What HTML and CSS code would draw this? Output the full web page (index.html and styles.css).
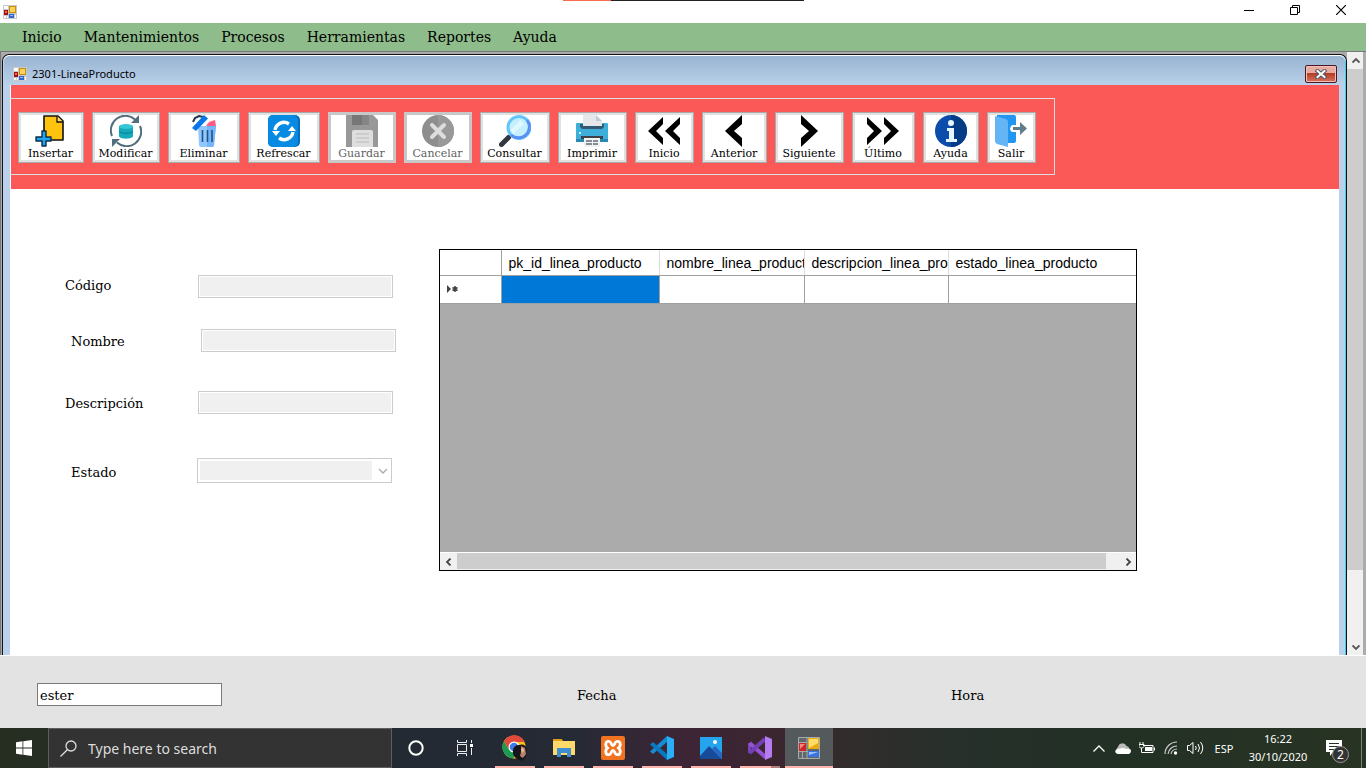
FILE: index.html
```html
<!DOCTYPE html>
<html lang="es">
<head>
<meta charset="utf-8">
<title>2301-LineaProducto</title>
<link rel="stylesheet" href="styles.css">
</head>
<body>
<svg class="defs" aria-hidden="true">
  <symbol id="form-icon" viewBox="0 0 14 14">
    <rect width="14" height="14" fill="#c9c9c9"/>
    <path d="M1 1h4v3H1zM1 11h2v2H1zM4 11h1v2H4zM12 10h1v3h-1z" fill="#fff"/>
    <rect x="6" y="1" width="7" height="7" fill="#c98d10"/>
    <rect x="7" y="2" width="5" height="5" fill="#fcd25a"/>
    <rect x="1" y="5" width="4" height="5" fill="#a01010"/>
    <rect x="2" y="6" width="2" height="2" fill="#ee6a55"/>
    <rect x="6" y="9" width="5" height="4" fill="#3464cf"/>
    <rect x="7" y="10" width="3" height="1" fill="#8db4ff"/>
  </symbol>
</svg>

<header class="titlebar">
  <svg class="app-icon"><use href="#form-icon"/></svg>
  <div class="window-buttons">
    <button aria-label="Minimizar"><svg width="10" height="10" viewBox="0 0 10 10"><path d="M0 5.500h10" stroke="#000"/></svg></button>
    <button aria-label="Restaurar"><svg width="10" height="10" viewBox="0 0 10 10"><path d="M.5 2.500h7v7h-7zM2.500 2.500v-2h7v7h-2" fill="none" stroke="#000"/></svg></button>
    <button aria-label="Cerrar"><svg width="10" height="10" viewBox="0 0 10 10"><path d="M0 0l10 10M10 0L0 10" stroke="#000" stroke-width="1.200"/></svg></button>
  </div>
</header>

<nav class="menu">
  <button>Inicio</button>
  <button>Mantenimientos</button>
  <button>Procesos</button>
  <button>Herramientas</button>
  <button>Reportes</button>
  <button>Ayuda</button>
</nav>

<main class="workspace">
  <section class="child">
    <div class="child-title">
      <svg class="app-icon"><use href="#form-icon"/></svg>
      <h1>2301-LineaProducto</h1>
      <button class="child-close" aria-label="Cerrar ventana">
        <svg width="12" height="10" viewBox="0 0 12 10"><path d="M2.500 2l7 6M9.500 2l-7 6" stroke="#4d5868" stroke-width="4" stroke-linecap="square"/><path d="M2.500 2l7 6M9.500 2l-7 6" stroke="#fff" stroke-width="2" stroke-linecap="square"/></svg>
      </button>
    </div>
    <div class="child-body">
      <div class="banner">
        <div class="toolbar" role="toolbar" aria-label="Navegador">
          <button class="tool"><svg viewBox="0 0 32 32"><path d="M9 1h14l5 5v19H9z" fill="#ffc20e" stroke="#111" stroke-width="1.600" stroke-linejoin="round"/><path d="M22 1v6h6" fill="#ffe06a" stroke="#111" stroke-width="1.300"/><path d="M7 16h4v6h5v4h-5v5H7v-5H1v-4h6z" fill="#1fa4ef" stroke="#0d2d44" stroke-width="1.400" stroke-linejoin="round"/></svg><span>Insertar</span></button>
          <button class="tool"><svg viewBox="0 0 32 32"><path d="M2 21A14.500 14.500 0 0 1 25 4.500M30 11A14.500 14.500 0 0 1 7 27.500" fill="none" stroke="#526d7b" stroke-width="2"/><path d="M29 0v8h-8zM2 24h8l-8 8z" fill="#526d7b"/><path d="M9 11v10c0 3.500 14 3.500 14 0V11z" fill="#14a9bb"/><ellipse cx="16" cy="11.500" rx="7" ry="2.600" fill="#35c6d6"/><path d="M9 16c1 3 13 3 14 0" fill="none" stroke="#087d90"/></svg><span>Modificar</span></button>
          <button class="tool"><svg viewBox="0 0 32 32"><path d="M5 7l2-4 4-2 4 1" fill="none" stroke="#26394e" stroke-width="2"/><path d="M10 11h18l-2 19q0 2-2 2H13q-2 0-2-2z" fill="#8fc8ff"/><path d="M19 11h9l-2 19q0 2-2 2h-5z" fill="#74b5fb"/><path d="M18 11l3-4 6-2 1 6z" fill="#ff5b87"/><path d="M4 13L16 0l4 3.500L8 16z" fill="#0876e8"/><path d="M14.500 15v12M19.500 15v12M24 15v12" stroke="#22527e" stroke-width="1.600"/></svg><span>Eliminar</span></button>
          <button class="tool"><svg viewBox="0 0 32 32"><rect width="32" height="32" rx="5" fill="#066bb8"/><rect width="30" height="32" rx="5" fill="#078be2"/><path d="M7 15a9 9 0 0 1 14-6M25 17a9 9 0 0 1-14 6" fill="none" stroke="#fff" stroke-width="3.400"/><path d="M4 16h8l-4 5zM20 16h8l-4-5z" fill="#fff"/></svg><span>Refrescar</span></button>
          <button class="tool" disabled><svg viewBox="0 0 32 32"><path d="M0 0h27l5 5v27H0z" fill="#989898"/><path d="M6 0h17v10H6z" fill="#777"/><path d="M16 0h7v10h-7z" fill="#858585"/><path d="M6 17q0-2 2-2h17q2 0 2 2v15H6z" fill="#dedede"/><path d="M10 19h13M10 23h13M10 27h13" stroke="#bbb"/></svg><span>Guardar</span></button>
          <button class="tool" disabled><svg viewBox="0 0 32 32"><circle cx="16" cy="16" r="16" fill="#8e8e8e"/><path d="M16 0a16 16 0 0 1 0 32z" fill="#999"/><path d="M10 10l12 12M22 10L10 22" stroke="#ddd" stroke-width="4" stroke-linecap="round"/></svg><span>Cancelar</span></button>
          <button class="tool"><svg viewBox="0 0 32 32"><path d="M10 22l3-3" stroke="#9aa8b1" stroke-width="3"/><path d="M2.500 29.500l7-7" stroke="#33383f" stroke-width="5" stroke-linecap="round"/><circle cx="20" cy="12.500" r="11" fill="#c4efff" stroke="#63c5fa" stroke-width="3"/><path d="M28 5A11 11 0 0 1 12 20" fill="none" stroke="#5a91f2" stroke-width="3"/><path d="M13 17L23 7" stroke="#dff8ff" stroke-width="5"/></svg><span>Consultar</span></button>
          <button class="tool"><svg viewBox="0 0 32 32"><rect y="8" width="32" height="19" rx="1" fill="#3eaedb"/><path d="M4 9h24v3l-2 2H6l-2-2z" fill="#315a70"/><path d="M7 0h13l6 6v5H7z" fill="#e4e8ea"/><path d="M20 0v6h6z" fill="#c4cbd0"/><path d="M0 24h32v3H0z" fill="#2787b5"/><path d="M5 21h22v3H5z" fill="#3c4248"/><path d="M8 23h16v9H8z" fill="#f0f2f3"/><path d="M10 26h6M17 26h5M10 29h6M17 29h5" stroke="#858e94" stroke-width="2"/><path d="M3 18h2" stroke="#c8efff" stroke-width="2"/></svg><span>Imprimir</span></button>
          <button class="tool"><svg viewBox="0 0 32 32"><path d="M15 2L0 16l15 14v-7l-7-7 7-7zM32 2L17 16l15 14v-7l-7-7 7-7z"/></svg><span>Inicio</span></button>
          <button class="tool"><svg viewBox="0 0 32 32"><path d="M24 0L7 16l17 16v-9l-8-7 8-7z"/></svg><span>Anterior</span></button>
          <button class="tool"><svg viewBox="0 0 32 32"><path d="M8 0l17 16L8 32v-9l8-7-8-7z"/></svg><span>Siguiente</span></button>
          <button class="tool"><svg viewBox="0 0 32 32"><path d="M0 2l15 14L0 30v-7l7-7-7-7zM17 2l15 14-15 14v-7l7-7-7-7z"/></svg><span>Último</span></button>
          <button class="tool"><svg viewBox="0 0 32 32"><circle cx="16" cy="16" r="16" fill="#0c4cac"/><path d="M16 0a16 16 0 0 1 0 32z" fill="#063b86"/><circle cx="16" cy="8" r="3" fill="#e6f7ff"/><path d="M12 13h7v11h3v3H11v-3h3v-8h-2z" fill="#e6f7ff"/></svg><span>Ayuda</span></button>
          <button class="tool"><svg viewBox="0 0 32 32"><path d="M2 0h17q2 0 2 2v24q0 2-2 2H2z" fill="#2196f3"/><path d="M0 1l11 3q2 1 2 3v25L2 29q-2-1-2-3z" fill="#64b5f6"/><path d="M17 10h7V5l8 8.500-8 8.500v-5h-7q-4-3 0-7z" fill="#fff"/><path d="M18 12h7V7l7 6.500-7 6.500v-5h-7z" fill="#607d8b"/></svg><span>Salir</span></button>
        </div>
      </div>
      <div class="content">
        <form class="fields">
          <div class="field"><label for="codigo">Código</label><input id="codigo" type="text" disabled></div>
          <div class="field field-nombre"><label for="nombre">Nombre</label><input id="nombre" type="text" disabled></div>
          <div class="field"><label for="descripcion">Descripción</label><input id="descripcion" type="text" disabled></div>
          <div class="field field-estado"><label for="estado">Estado</label>
            <div class="select-wrap"><select id="estado" disabled><option></option></select><svg width="10" height="6" viewBox="0 0 10 6"><path d="M1 1l4 4 4-4" fill="none" stroke="#aaa" stroke-width="1.300"/></svg></div>
          </div>
        </form>
        <div class="datagrid">
          <table>
            <colgroup><col class="col-mark"><col class="col-id"><col class="col-nombre"><col class="col-descripcion"><col></colgroup>
            <thead><tr><th></th><th>pk_id_linea_producto</th><th>nombre_linea_producto</th><th>descripcion_linea_producto</th><th>estado_linea_producto</th></tr></thead>
            <tbody><tr><td class="mark"><svg width="12" height="8" viewBox="0 0 12 8"><path d="M0 0l4 4-4 4z" fill="#444"/><path d="M8 1v6M5.500 2.500l5 3M10.500 2.500l-5 3" stroke="#444" stroke-width="1.500"/></svg></td><td class="selected"></td><td></td><td></td><td></td></tr></tbody>
          </table>
          <div class="hscroll">
            <button aria-label="Desplazar a la izquierda"><svg width="8" height="8" viewBox="0 0 8 8"><path d="M5.500 .500L2 4l3.500 3.500" fill="none" stroke="#444" stroke-width="1.800"/></svg></button>
            <div class="htrack"><div class="hthumb"></div></div>
            <button aria-label="Desplazar a la derecha"><svg width="8" height="8" viewBox="0 0 8 8"><path d="M2.500 .500L6 4 2.500 7.500" fill="none" stroke="#444" stroke-width="1.800"/></svg></button>
          </div>
        </div>
      </div>
    </div>
  </section>
  <div class="vscroll">
    <button aria-label="Desplazar hacia arriba"><svg width="8" height="8" viewBox="0 0 8 8"><path d="M.500 5.500L4 2l3.500 3.500" fill="none" stroke="#555" stroke-width="1.800"/></svg></button>
    <div class="vtrack"><div class="vthumb"></div></div>
    <button aria-label="Desplazar hacia abajo"><svg width="8" height="8" viewBox="0 0 8 8"><path d="M.500 2.500L4 6l3.500-3.500" fill="none" stroke="#555" stroke-width="1.800"/></svg></button>
  </div>
</main>

<section class="status">
  <input class="user" type="text" value="ester" aria-label="Usuario">
  <span>Fecha</span>
  <span>Hora</span>
</section>

<footer class="taskbar">
  <button class="start" aria-label="Inicio de Windows"><svg width="16" height="16" viewBox="0 0 16 16"><path d="M0 2.200l6.500-.9v6.200H0zM7.300 1.200L16 0v7.500H7.300zM0 8.400h6.500v6.300L0 13.800zM7.300 8.400H16V16l-8.700-1.200z" fill="#fff"/></svg></button>
  <label class="search"><svg width="17" height="17" viewBox="0 0 17 17"><circle cx="11" cy="6" r="5" fill="none" stroke="#ddd" stroke-width="1.300"/><path d="M7.300 9.700L.500 16.500" stroke="#ddd" stroke-width="1.300"/></svg><input type="text" placeholder="Type here to search" aria-label="Type here to search"></label>
  <button class="sys" aria-label="Cortana"><svg width="16" height="16" viewBox="0 0 16 16"><circle cx="8" cy="8" r="6.700" fill="none" stroke="#fff" stroke-width="2"/></svg></button>
  <button class="sys" aria-label="Task view"><svg width="17" height="16" viewBox="0 0 17 16"><path d="M1.500 0v2.500h9V0M1.500 16v-2.500h9V16M1.500 4.500h9v7h-9zM15.500 0v3M15.500 8v7" fill="none" stroke="#eee"/><path d="M14 4h3v3h-3z" fill="#fff"/></svg></button>
  <div class="apps">
    <button aria-label="Chrome"><svg width="26" height="26" viewBox="0 0 26 26"><circle cx="12" cy="12" r="11.500" fill="#fbc116"/><path d="M2 6.300A11.500 11.500 0 0 1 22.500 7H12l-5 8z" fill="#e2483d"/><path d="M2 6.300a11.500 11.500 0 0 0 9 17.200l5-8.500-9 0z" fill="#199b55"/><circle cx="12" cy="12" r="5.500" fill="#fff"/><circle cx="12" cy="12" r="4.300" fill="#3a7de8"/><path d="M11 15q1-5 6-5 6-2 8 4l-1 8-4 4-5-2q-5-3-4-9z" fill="#17151b"/><path d="M19 11l4 2 1 6-3 4-3-2 1-4z" fill="#b88368"/><path d="M19 14l2-1 1 3-2 2z" fill="#e8bca2"/></svg></button>
    <button aria-label="Explorador"><svg width="22" height="20" viewBox="0 0 22 20"><path d="M0 1h8l2 2h12v14H0z" fill="#ffd96a"/><path d="M0 1h9v2H0z" fill="#dda017"/><path d="M4 19v-9h14v9h-4v-4H8v4z" fill="#3d8fd1"/></svg></button>
    <button aria-label="XAMPP"><svg width="24" height="24" viewBox="0 0 24 24"><rect width="24" height="24" rx="2" fill="#ef7320"/><path d="M8.500 5.500c-4-1-5 4-2 6.500-3 2.500-2 7.500 2 6.500 2-.5 1.500-4 3.500-4s1.500 3.500 3.500 4c4 1 5-4 2-6.500 3-2.500 2-7.500-2-6.500-2 .5-1.500 4-3.500 4s-1.500-3.500-3.500-4z" fill="none" stroke="#fff" stroke-width="2.800"/></svg></button>
    <button aria-label="VS Code"><svg width="24" height="24" viewBox="0 0 24 24"><path d="M17 0v6L3 18l-3-2.500z" fill="#168bd2"/><path d="M0 8.500L3 6l14 12v6z" fill="#0879bf"/><path d="M17 0l7 3v18l-7 3z" fill="#2aaef5"/></svg></button>
    <button aria-label="Fotos"><svg width="22" height="22" viewBox="0 0 22 22"><path d="M0 0h22v22H0z" fill="#25a5ee"/><path d="M0 19L9 9l13 13H0z" fill="#174b9a"/><path d="M12 12l3-3 7 7v6z" fill="#2967c2"/><circle cx="15" cy="5" r="2" fill="#fff"/></svg></button>
    <button class="grouped" aria-label="Visual Studio"><svg width="24" height="24" viewBox="0 0 24 24"><path d="M1.500 7v10" stroke="#7844b7" stroke-width="3"/><path d="M1.500 7L18 21.500" fill="none" stroke="#9452d3" stroke-width="4"/><path d="M1.500 17L17 3" stroke="#7440b5" stroke-width="4"/><path d="M17 0l7 3v18l-7 3z" fill="#b47cf0"/></svg></button>
    <button class="active" aria-label="LineaProducto"><svg width="22" height="22" viewBox="0 0 22 22"><path d="M.500 .500h21v21H.500zM9 0v22M0 5.500h9M0 14.500h22M4.500 14v8" fill="#62686a" stroke="#a5aaac"/><path d="M10 1h11v11H10z" fill="#e8ad12"/><path d="M11 2h9v4l-9 5z" fill="#ffdc6a"/><path d="M1 6h7v8H1z" fill="#cd2828"/><path d="M2 7h5L2 12z" fill="#f28a7c"/><path d="M10 14h11v6H10z" fill="#3b73df"/><path d="M11 15h9l-9 3z" fill="#9ec1ff"/></svg></button>
  </div>
  <div class="tray">
    <button aria-label="Iconos ocultos"><svg width="12" height="7" viewBox="0 0 12 7"><path d="M.500 6.500L6 1l5.500 5.500" fill="none" stroke="#fff" stroke-width="1.300"/></svg></button>
    <button aria-label="OneDrive"><svg width="16" height="11" viewBox="0 0 16 11"><path d="M3 9a3 3 0 0 1 0-5 4.500 4.500 0 0 1 8.500-1A4 4 0 0 1 14 9z" fill="#bbb"/><path d="M1 10q-2-2 1-4 3 0 5-1 3 0 4 1 5-1 5 2 0 2-2 3H3q-1 0-2-1z" fill="#fff"/></svg></button>
    <button aria-label="Batería"><svg width="16" height="12" viewBox="0 0 16 12"><path d="M4 3.500h10v7H4M15.500 5.500v3M1 0v2M4 0v2M0 2.500h5v2L3.500 6h-2L0 4.500zM2.500 6v4.500H5" fill="none" stroke="#fff"/><path d="M6 5h7v4H6z" fill="#fff"/></svg></button>
    <button aria-label="Red"><svg width="14" height="14" viewBox="0 0 14 14"><path d="M1 13A12 12 0 0 1 13 1M4 13a9 9 0 0 1 9-8M7 13a6 6 0 0 1 6-5" fill="none" stroke="#ccc" stroke-width="1.200"/><circle cx="11.500" cy="12" r="1.700" fill="#fff"/></svg></button>
    <button aria-label="Volumen"><svg width="17" height="14" viewBox="0 0 17 14"><path d="M.500 4.500h2L6 1.500v11l-3.500-3h-2zM8.500 5q1.500 2 0 4M11 3q3 4 0 8M13.500 1q4.500 6 0 12" fill="none" stroke="#fff"/></svg></button>
    <button class="lang">ESP</button>
    <button class="clock"><span>16:22</span><span>30/10/2020</span></button>
    <button class="notify" aria-label="2 notificaciones"><svg width="16" height="16" viewBox="0 0 16 16"><path d="M0 0h16v12H7l-3 4v-4H0z" fill="#fff"/><path d="M3 3.500h10M3 6.500h10M3 9.500h6" stroke="#263327"/></svg><span class="badge">2</span></button>
  </div>
</footer>
</body>
</html>
```
FILE: styles.css
```css
* { box-sizing: border-box; }

body {
  margin: 0;
  min-height: 100vh;
  display: flex;
  flex-direction: column;
  background: #ababab;
  color: #000;
  font-family: "DejaVu Serif", serif;
  font-size: 13px;
}

button {
  padding: 0;
  border: 0;
  background: none;
  color: inherit;
  font: inherit;
}

input { font: inherit; }

svg { display: block; flex: none; }

.defs { display: none; }

.app-icon { width: 14px; height: 14px; }

/* Main window */

.titlebar {
  display: flex;
  align-items: center;
  justify-content: space-between;
  height: 23px;
  padding: 0 2px 0 3px;
  background: linear-gradient(90deg, #fa6a50 48px, #222 48px) 563px 0 / 241px 1px no-repeat #fff;
}

.window-buttons { display: flex; height: 20px; align-self: flex-start; }

.window-buttons button {
  display: grid;
  place-items: center;
  width: 46px;
}

.menu {
  display: flex;
  align-items: center;
  gap: 22px;
  height: 28px;
  padding: 0 22px;
  background: #8fbc8b;
  font-size: 14px;
}

.workspace {
  flex: 1;
  display: flex;
  padding: 0 3px 0 1px;
  border-top: 1px solid #777;
  border-left: 1px solid #777;
  background: #ababab;
}

/* Child window */

.child {
  flex: 1;
  display: flex;
  flex-direction: column;
  margin-top: 2px;
  padding: 0 7px;
  border: 1px solid #111;
  border-bottom: 0;
  border-radius: 7px 7px 0 0;
  background: #b9d1ea;
  box-shadow: inset 0 1px #fff, inset -1px 0 #42cdea;
}

.child-title {
  display: flex;
  align-items: center;
  gap: 5px;
  height: 30px;
  margin: 0 -6px;
  padding: 6px 8px 0 9px;
  border-radius: 6px 6px 0 0;
  border-top: 1px solid #fff;
  background: linear-gradient(#99b4d1, #b9d1ea);
}

.child-title h1 {
  margin: 0;
  font: 11px "Noto Sans", sans-serif;
}

.child-close {
  display: grid;
  place-items: center;
  width: 32px;
  height: 18px;
  margin-left: auto;
  border: 1px solid #4b1525;
  border-radius: 2px;
  background: linear-gradient(#e9aaa0 45%, #b63a24 45%, #d4735e);
  box-shadow: inset 0 0 0 1px #f2c1b8;
}

.child-body {
  flex: 1;
  border-left: 1px solid #fff;
  background: #fff;
}

.banner { padding: 13px 0 14px; background: #fb5858; }

.toolbar {
  display: grid;
  grid-template-columns: 66px 68px 72px 72px 68px 68px 70px 69px 59px 65px 69px 63px 56px 49px;
  gap: 8px;
  width: max-content;
  padding: 13px 18px 11px 7px;
  border: 1px solid #ddd;
  border-left: 0;
  font-size: 11px;
}

.tool {
  display: flex;
  flex-direction: column;
  align-items: center;
  height: 51px;
  padding: 2px 1px 0 0;
  border: 1px solid #a9a9a9;
  background: #fff;
  box-shadow: inset 0 0 0 2px #e1e1e1;
  line-height: 13px;
}

.tool svg { width: 32px; height: 32px; }

.tool:disabled {
  border-color: #c8c8c8;
  box-shadow: inset 0 0 0 2px #c8c8c8;
  color: #5f5f5f;
}

.content {
  display: flex;
  align-items: flex-start;
  padding: 60px 54px;
}

/* Form */

.fields { width: 374px; padding-top: 26px; }

.field {
  display: flex;
  align-items: center;
  height: 23px;
  margin-bottom: 39px;
}

.field:first-child { margin-bottom: 31px; }

.field label { width: 133px; padding-top: 2px; }

.field:first-child label { padding: 0 0 3px; }

.field-nombre label { width: 136px; padding-left: 6px; }

.field-estado { height: 25px; margin-top: 44px; }

.field-estado label { width: 132px; padding: 3px 0 0 6px; }

.field input,
.field select {
  width: 195px;
  height: 100%;
  padding: 0;
  border: 1px solid #ccc;
  border-radius: 0;
  background: #f0f0f0;
  box-shadow: inset 0 0 0 1px #fff;
}

.select-wrap { position: relative; height: 100%; }

.field select {
  appearance: none;
  opacity: 1;
  background: linear-gradient(90deg, #f0f0f0 174px, #fff 174px);
  box-shadow: inset 0 0 0 2px #fff;
}

.select-wrap svg { position: absolute; right: 4px; top: 10px; }

/* Data grid */

.datagrid {
  display: flex;
  flex-direction: column;
  width: 698px;
  height: 322px;
  border: 1px solid #000;
  background: #ababab;
  font-family: "Liberation Sans", sans-serif;
  font-size: 14px;
}

.datagrid table {
  width: 100%;
  table-layout: fixed;
  border-collapse: collapse;
  background: #fff;
}

.col-mark { width: 61px; }
.col-id { width: 158px; }
.col-nombre { width: 145px; }
.col-descripcion { width: 144px; }

.datagrid th {
  height: 25px;
  padding: 2px 1px 0 7px;
  overflow: hidden;
  border-right: 1px solid #ddd;
  border-bottom: 1px solid #a0a0a0;
  font-weight: normal;
  line-height: 20px;
  text-align: left;
  white-space: nowrap;
}

.datagrid td {
  height: 28px;
  padding: 0;
  border-right: 1px solid #a0a0a0;
  border-bottom: 1px solid #a0a0a0;
}

.datagrid th:first-child { border-right-color: #a0a0a0; }

.datagrid th:last-child,
.datagrid td:last-child { border-right: 0; }

.datagrid .mark { padding-left: 7px; }

.datagrid .selected { background: #0078d7; }

.hscroll {
  display: flex;
  height: 18px;
  margin-top: auto;
  padding-bottom: 1px;
  border-top: 1px solid #fff;
  background: #f0f0f0;
}

.hscroll button,
.vscroll button { display: grid; place-items: center; width: 17px; height: 17px; }

.htrack { flex: 1; }

.hthumb { width: 98%; height: 100%; background: #cdcdcd; }

/* Workspace scrollbar */

.vscroll {
  display: flex;
  flex-direction: column;
  width: 16px;
  background: #f0f0f0;
}

.vtrack { flex: 1; }

.vthumb { height: 88%; background: #cdcdcd; }

/* Status strip */

.status {
  display: grid;
  grid-template-columns: 540px 374px 1fr;
  align-items: center;
  height: 73px;
  padding: 5px 37px 0;
  border-top: 1px solid #fff;
  background: #e3e3e3;
}

.status span { padding-top: 2px; }

.user {
  width: 185px;
  height: 23px;
  padding: 1px 2px 0;
  border: 1px solid #7a7a7a;
  background: #fff;
}

/* Taskbar */

.taskbar {
  display: flex;
  height: 40px;
  background: linear-gradient(90deg, #262e22 0, #232a33 30%, #252a35 42%, #3d2536 50%, #3b2630 57%, #332c2c 61%, #27302b 70%, #223025 80%, #283323);
  color: #fff;
  font-family: "Noto Sans", sans-serif;
}

.taskbar button { display: grid; place-items: center; }

.start,
.sys { width: 48px; }

.search {
  display: flex;
  align-items: center;
  gap: 11px;
  width: 344px;
  padding-left: 11px;
  border: 1px solid #5d5d5d;
  background: #333;
}

.search input {
  flex: 1;
  min-width: 0;
  padding: 0;
  border: 0;
  background: none;
  color: #fff;
  font-size: 14px;
}

.search input::placeholder { color: #ddd; opacity: 1; }

.apps { display: flex; gap: 1px; margin-left: 3px; }

.apps button {
  width: 48px;
  background: linear-gradient(#ffb3ab, #ffb3ab) center bottom / 40px 2px no-repeat;
}

.apps .grouped { background-image: linear-gradient(90deg, #ffb3ab 31px, #b77f7c 31px); }

.apps .active { background-color: #54595c; background-size: 100% 2px; }

.tray {
  display: flex;
  margin-left: auto;
  margin-right: 4px;
  border-right: 1px solid #7b847a;
  font-size: 12px;
}

.tray button { width: 24px; }

.tray .lang { width: 34px; font-size: 11px; }

.tray .clock {
  width: 74px;
  align-content: center;
  font-size: 11px;
  line-height: 18px;
}

.tray .notify { position: relative; width: 46px; padding-right: 8px; }

.badge {
  position: absolute;
  left: 17px;
  top: 18px;
  width: 17px;
  height: 17px;
  border: 1px solid #999;
  border-radius: 50%;
  background: #333;
  font-size: 12px;
  line-height: 15px;
  text-align: center;
}
```
